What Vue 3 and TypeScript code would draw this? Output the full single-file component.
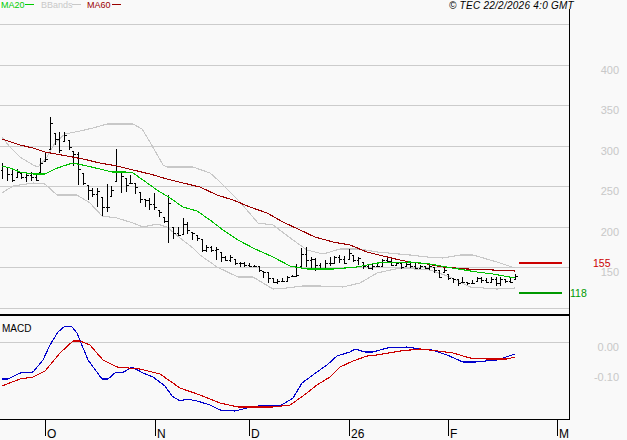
<script setup lang="ts">
type Pt = [number, number]
const toPoints = (p: Pt[]) => p.map((q) => q.join(',')).join(' ')

const ma60 = toPoints([[2,139],[20,145],[33,148],[45,152],[67,156],[83,159],[100,163],[117,166],[133,170],[150,174],[167,179],[183,183],[200,187],[217,195],[233,200],[250,207],[267,213],[283,222],[300,230],[315,237],[333,242],[350,245],[367,252],[383,256],[400,260],[410,262],[427,264],[443,267],[467,269],[493,270],[515,271]])
const ma20 = toPoints([[2,166],[10,168],[20,172],[33,174],[45,174],[55,169],[63,166],[73,163],[87,166],[100,169],[112,172],[125,172],[133,173],[143,180],[157,190],[170,198],[183,207],[197,211],[210,220],[223,230],[238,240],[253,248],[273,257],[290,266],[307,269],[333,269],[357,267],[377,263],[410,262],[430,264],[452,268],[477,272],[493,274],[515,278]])
const bbUp = toPoints([[2,137],[10,147],[20,157],[33,165],[38,167],[47,157],[55,143],[65,134],[80,131],[93,128],[107,124],[133,124],[142,129],[150,142],[163,165],[167,167],[193,167],[210,173],[218,180],[240,202],[258,223],[273,225],[293,240],[307,250],[323,254],[340,249],[360,249],[377,252],[410,255],[427,257],[443,258],[460,255],[473,255],[497,262],[515,268]])
const bbLow = toPoints([[2,193],[13,186],[33,183],[45,184],[57,195],[77,195],[90,203],[102,216],[117,218],[133,223],[143,227],[157,224],[167,227],[180,238],[193,248],[200,255],[217,267],[238,277],[253,277],[273,289],[287,288],[303,286],[320,286],[343,287],[360,283],[377,273],[400,268],[430,270],[450,277],[470,287],[497,289],[515,288]])
const macd = toPoints([[2,379],[8,379],[20,373],[33,372],[43,360],[50,345],[58,332],[65,326],[72,327],[77,333],[88,360],[102,379],[108,379],[116,372],[122,373],[132,367],[143,373],[153,377],[165,386],[172,396],[180,401],[187,399],[197,401],[210,405],[220,410],[235,411],[247,408],[258,406],[280,406],[293,398],[302,383],[317,372],[327,365],[337,356],[350,352],[355,349],[365,352],[373,352],[387,348],[407,347],[420,349],[432,350],[447,355],[463,362],[475,362],[497,360],[515,354]])
const signal = toPoints([[2,386],[20,379],[33,377],[45,371],[60,353],[73,341],[80,341],[90,345],[103,360],[117,367],[140,369],[160,374],[180,388],[200,395],[210,399],[220,403],[238,407],[273,407],[290,405],[303,396],[317,385],[330,377],[340,367],[353,361],[367,356],[377,355],[400,351],[420,349],[438,351],[453,353],[470,358],[487,359],[507,359],[515,357]])

const groups: { base: number; rows: Pt[] }[] = [
  { base: 110, rows: [[160,208],[170,212],[178,217],[178,205],[188,208],[193,215],[186,212],[188,213],[145,190],[125,155],[20,120],[68,105],[65,130],[67,95],[90,120],[122,168],[125,225],[188,225],[225,270],[235,262],[235,290],[262,318],[222,305],[228,262],[117,215],[187,250],[205,245],[195,222],[218,252],[245,280],[268,292],[265,300],[250,300],[300,322],[320,338],[255,400],[352,388],[352,378],[325,375],[335,372],[365,390],[375,393]] },
  { base: 180, rows: [[178,215],[195,217],[197,217],[202,240],[215,247],[228,243],[225,245],[238,255],[245,262],[245,260],[248,262],[255,262],[258,275],[272,295],[275,310],[295,308],[298,311],[295,305],[288,305],[285,292],[252,290],[205,262],[200,262],[230,265],[235,272],[250,268],[240,268],[232,258],[228,252],[225,250],[228,252],[208,240],[225,245],[232,255],[245,268],[255,268],[252,270],[252,262],[238,262],[235,248],[238,258],[245,258],[248,268],[248,262]] },
  { base: 220, rows: [[128,145],[130,147],[135,147],[138,147],[135,150],[142,160],[150,175],[145,160],[163,180],[175,190],[178,197],[172,190],[185,195],[180,192],[172,187],[172,190],[175,190],[172,188],[170,198],[172,198],[176,190],[172,188],[162,180]] },
]

interface Bar { id: number; x: number; top: number; h: number; open: number; close: number }
const bars: Bar[] = []
let prev = 170
groups.forEach((g) => {
  g.rows.forEach((r) => {
    const i = bars.length
    const top = Math.round(g.base + r[0] / 3)
    const bottom = Math.round(g.base + r[1] / 3)
    const h = Math.max(bottom - top, 2)
    const open = Math.min(Math.max(prev, top), top + h - 1)
    const close = top + Math.round((h * ((i * 7) % 5 + 1)) / 6)
    bars.push({ id: i, x: Math.round(2.33 + 4.744 * i), top, h, open, close })
    prev = close
  })
})

const grid = [24, 65, 105, 146, 186, 227, 267, 308, 342]
const priceLabels = [
  { t: '400', y: 74 }, { t: '350', y: 114 }, { t: '300', y: 155 },
  { t: '250', y: 195 }, { t: '200', y: 236 }, { t: '150', y: 276 },
  { t: '0.00', y: 351 }, { t: '-0.10', y: 381 },
]
const months = [
  { t: 'O', x: 45 }, { t: 'N', x: 155 }, { t: 'D', x: 249 },
  { t: '26', x: 349 }, { t: 'F', x: 448 }, { t: 'M', x: 557 },
]
</script>

<template>
  <div class="page">
    <svg class="chart" width="627" height="440" viewBox="0 0 627 440">
      <g class="crisp">
        <rect v-for="y in grid" :key="y" class="grid" x="0" :y="y" width="569" height="1" />
        <polyline class="line bb" :points="bbUp" />
        <polyline class="line bb" :points="bbLow" />
        <g v-for="b in bars" :key="b.id">
          <rect class="ink" :x="b.x" :y="b.top" width="1" :height="b.h" />
          <rect class="ink" :x="b.x - 1" :y="b.open" width="1" height="1" />
          <rect class="ink" :x="b.x + 1" :y="b.close" width="2" height="1" />
        </g>
        <polyline class="line ma60" :points="ma60" />
        <polyline class="line ma20" :points="ma20" />
        <polyline class="line macd" :points="macd" />
        <polyline class="line signal" :points="signal" />

        <rect class="ink" x="0" y="314" width="569" height="2" />
        <rect class="ink" x="0" y="419" width="570" height="1" />
        <rect class="ink" x="569" y="9" width="1" height="411" />
        <rect v-for="m in months" :key="m.x" class="ink" :x="m.x" y="419" width="1" height="17" />

        <rect class="fill-ma60" x="519" y="262" width="43" height="2" />
        <rect class="fill-ma20" x="519" y="292" width="43" height="2" />

        <rect class="fill-lime" x="25" y="4" width="9" height="1" />
        <rect class="fill-bb" x="72" y="4" width="9" height="1" />
        <rect class="fill-dark" x="112" y="4" width="9" height="1" />
      </g>

      <text class="legend lime" x="1" y="8">MA20</text>
      <text class="legend grey" x="41" y="8">BBands</text>
      <text class="legend dark" x="87" y="8">MA60</text>
      <text class="stamp" x="574" y="9.2" text-anchor="end">© TEC 22/2/2026 4:0 GMT</text>

      <text v-for="l in priceLabels" :key="l.t" class="price" x="619" :y="l.y" text-anchor="end">{{ l.t }}</text>
      <text class="value red" x="593" y="267">155</text>
      <text class="value green" x="570" y="297">118</text>

      <text class="macd-title" x="2" y="332">MACD</text>
      <text v-for="m in months" :key="m.t" class="month" :x="m.x + 2" y="438">{{ m.t }}</text>
    </svg>
  </div>
</template>

<style scoped>
.page {
  width: 627px;
  height: 440px;
  overflow: hidden;
  background: #f9f9f9;
}
.chart {
  display: block;
}
.crisp {
  shape-rendering: crispEdges;
}
.grid {
  fill: #cccccc;
}
.ink {
  fill: #000000;
}
.line {
  fill: none;
  stroke-width: 1.1;
}
.bb {
  stroke: #c8c8c8;
}
.ma60 {
  stroke: #990000;
}
.ma20 {
  stroke: #00c000;
}
.macd {
  stroke: #0000cc;
}
.signal {
  stroke: #cc0000;
}
.fill-ma60 {
  fill: #cc0000;
}
.fill-ma20 {
  fill: #009900;
}
.fill-lime {
  fill: #00cc00;
}
.fill-bb {
  fill: #c8c8c8;
}
.fill-dark {
  fill: #990000;
}
text {
  font-family: "Liberation Sans", Arial, sans-serif;
}
.legend {
  font-size: 9px;
}
.lime {
  fill: #00cc00;
}
.grey {
  fill: #c8c8c8;
}
.dark {
  fill: #990000;
}
.stamp {
  font-size: 10px;
  letter-spacing: 0.26px;
  font-style: italic;
  fill: #000000;
}
.price {
  font-size: 11px;
  fill: #c8c8c8;
}
.value {
  font-size: 10.5px;
}
.red {
  fill: #cc0000;
}
.green {
  fill: #009900;
}
.macd-title {
  font-size: 10px;
  fill: #000000;
}
.month {
  font-size: 12px;
  fill: #000000;
}
</style>
